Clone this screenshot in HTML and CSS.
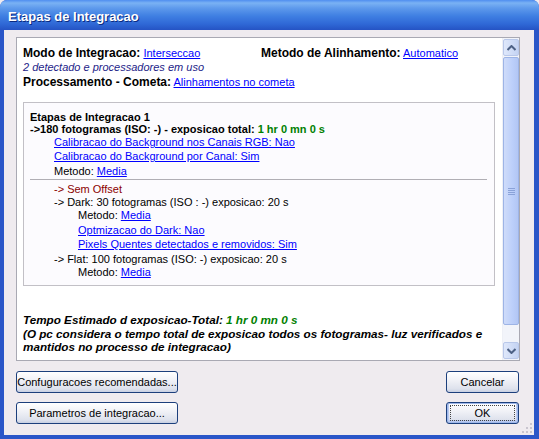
FILE: index.html
```html
<!DOCTYPE html>
<html>
<head>
<meta charset="utf-8">
<link rel="stylesheet" href="styles.css">
</head>
<body>
<div class="window">
  <div class="titlebar"><span class="title">Etapas de Integracao</span></div>
  <div class="client">
    <div class="listbox">
      <div class="scrollarea">
        <div class="top-row">
          <div class="line col1"><b class="lbl">Modo de Integracao:</b> <a>Interseccao</a></div>
          <div class="line"><b class="lbl">Metodo de Alinhamento:</b> <a>Automatico</a></div>
        </div>
        <div class="line note">2 detectado e processadores em uso</div>
        <div class="line"><b class="lbl">Processamento - Cometa:</b> <a>Alinhamentos no cometa</a></div>

        <div class="stage">
          <div class="line tight"><b>Etapas de Integracao 1</b></div>
          <div class="line tight"><b>-&gt;180 fotogramas (ISO: -) - exposicao total: <span class="green">1 hr 0 mn 0 s</span></b></div>
          <div class="line in1"><a>Calibracao do Background nos Canais RGB: Nao</a></div>
          <div class="line in1"><a>Calibracao do Background por Canal: Sim</a></div>
          <div class="line in1 gap">Metodo: <a>Media</a></div>
          <div class="sep"></div>
          <div class="line in1 red">-&gt; Sem Offset</div>
          <div class="line in1 tight13">-&gt; Dark: 30 fotogramas (ISO : -) exposicao: 20 s</div>
          <div class="line in2 tight13">Metodo: <a>Media</a></div>
          <div class="line in2 gap"><a>Optmizacao do Dark: Nao</a></div>
          <div class="line in2"><a>Pixels Quentes detectados e removidos: Sim</a></div>
          <div class="line in1 gap">-&gt; Flat: 100 fotogramas (ISO: -) exposicao: 20 s</div>
          <div class="line in2 tight13">Metodo: <a>Media</a></div>
        </div>

        <div class="footer">
          <div class="line">Tempo Estimado d exposicao-Total: <span class="green">1 hr 0 mn 0 s</span></div>
          <div class="line tight13">(O pc considera o tempo total de exposicao todos os fotogramas- luz verificados e</div>
          <div class="line tight13">mantidos no processo de integracao)</div>
        </div>
      </div>
      <div class="scrollbar">
        <div class="sb-btn"><svg width="9" height="6" viewBox="0 0 9 6"><path d="M0.5 5 L4.5 1 L8.5 5" fill="none" stroke="#4d6185" stroke-width="2"/></svg></div>
        <div class="sb-thumb"><div class="grip"><i></i><i></i><i></i><i></i></div></div>
        <div class="sb-track"></div>
        <div class="sb-btn"><svg width="9" height="6" viewBox="0 0 9 6"><path d="M0.5 1 L4.5 5 L8.5 1" fill="none" stroke="#4d6185" stroke-width="2"/></svg></div>
      </div>
    </div>
    <div class="buttons">
      <div class="btn-col">
        <button class="btn wide">Confuguracoes recomendadas...</button>
        <button class="btn wide">Parametros de integracao...</button>
      </div>
      <div class="btn-col">
        <button class="btn narrow">Cancelar</button>
        <button class="btn narrow default"><span class="focus">OK</span></button>
      </div>
    </div>
    <svg class="grip-corner" width="12" height="12" viewBox="0 0 12 12">
      <g fill="#c9c5cf">
        <rect x="9" y="1" width="2" height="2"/>
        <rect x="5" y="5" width="2" height="2"/><rect x="9" y="5" width="2" height="2"/>
        <rect x="1" y="9" width="2" height="2"/><rect x="5" y="9" width="2" height="2"/><rect x="9" y="9" width="2" height="2"/>
      </g>
    </svg>
  </div>
</div>
</body>
</html>
```

FILE: styles.css
```css
html, body {
  margin: 0;
  padding: 0;
  background: #efebef;
}
body {
  font-family: "Liberation Sans", Arial, sans-serif;
  font-size: 11px;
  color: #000;
}
.window {
  width: 539px;
  height: 439px;
  box-sizing: border-box;
  display: flex;
  flex-direction: column;
  background: #2a56c8;
  border-radius: 7px 7px 0 0;
  overflow: hidden;
}
.titlebar {
  height: 30px;
  flex: none;
  background: linear-gradient(to bottom, #4f8ef0 0px, #7ab2f4 3px, #5e9aec 8px, #3f7fe2 16px, #2f68d6 24px, #2553c4 30px);
  display: flex;
  align-items: center;
  padding-left: 8px;
}
.title {
  color: #fff;
  font-family: "Liberation Sans", Arial, sans-serif;
  font-weight: bold;
  font-size: 13px;
  text-shadow: 1px 1px 0 #0a2a80;
  position: relative;
  top: 1px;
}
.client {
  flex: 1;
  margin: 0 5px 4px 4px;
  background: #efebef;
  padding: 7px 0 0 12px;
  position: relative;
}
.listbox {
  width: 502px;
  height: 322px;
  border: 1px solid #a9a9b3;
  background: #fff;
  display: flex;
}
.scrollarea {
  flex: 1;
  padding: 8px 0 0 6px;
  overflow: hidden;
}
.line {
  height: 14px;
  line-height: 14px;
  white-space: nowrap;
}
.lbl {
  font-size: 12px;
}
.top-row {
  display: flex;
}
.col1 {
  width: 238px;
  flex: none;
}
a {
  color: #0000ff;
  text-decoration: underline;
}
.note {
  font-style: italic;
  color: #1c1c88;
  height: 15px;
}
.stage {
  margin-top: 13px;
  width: 472px;
  height: 184px;
  box-sizing: border-box;
  border: 1px solid #c2c0c6;
  background: #fcfbfe;
  padding: 8px 0 0 6px;
}
.tight { height: 12px; line-height: 12px; }
.tight13 { height: 13px; line-height: 13px; }
.gap { margin-top: 1px; }
.in1 { padding-left: 24px; }
.in2 { padding-left: 48px; }
.sep {
  height: 1px;
  background: #b0aeb4;
  margin: 1px 7px 2px 0;
}
.red { color: #8b0000; }
.green { color: #008000; }
.footer {
  margin-top: 27px;
  font-weight: bold;
  font-style: italic;
  font-size: 11.7px;
}
.scrollbar {
  width: 16px;
  flex: none;
  display: flex;
  flex-direction: column;
  background: #f2f4fa;
  border-left: 1px solid #eef0f6;
}
.sb-btn {
  margin: 1px 0;
  border: 1px solid #b9c8ea;
  border-radius: 2px;
  background: linear-gradient(to right, #dfe8fb, #c4d3f3);
  display: flex;
  align-items: center;
  justify-content: center;
  box-sizing: border-box;
  height: 17px;
}
.sb-thumb {
  height: 266px;
  border: 1px solid #9db4e6;
  border-radius: 2px;
  background: linear-gradient(to right, #cfdcfa, #bccffa 60%, #b2c6f4);
  display: flex;
  align-items: center;
  justify-content: center;
}
.grip {
  display: flex;
  flex-direction: column;
  gap: 1px;
}
.grip i {
  display: block;
  width: 7px;
  height: 1px;
  background: #8aa2d8;
}
.sb-track {
  flex: 1;
}
.buttons {
  display: flex;
  justify-content: space-between;
  margin-top: 10px;
  width: 503px;
}
.btn-col {
  display: flex;
  flex-direction: column;
  gap: 9px;
}
.btn {
  font-family: "Liberation Sans", Arial, sans-serif;
  font-size: 11px;
  color: #000;
  height: 22px;
  border: 1px solid #1c3f7c;
  border-radius: 3px;
  background: linear-gradient(to bottom, #ffffff 0%, #f1f2f7 40%, #dde1ec 85%, #c7cfe2 100%);
  padding: 0;
  margin: 0;
}
.wide { width: 162px; }
.narrow { width: 73px; }
.default {
  box-shadow: inset 0 0 0 1px #9fb8ea, inset 0 -1px 0 2px #bccbf0;
}
.focus {
  display: inline-block;
  width: 63px;
  height: 14px;
  line-height: 14px;
  outline: 1px dotted #444;
}
.grip-corner {
  position: absolute;
  right: 1px;
  bottom: 1px;
}
```
